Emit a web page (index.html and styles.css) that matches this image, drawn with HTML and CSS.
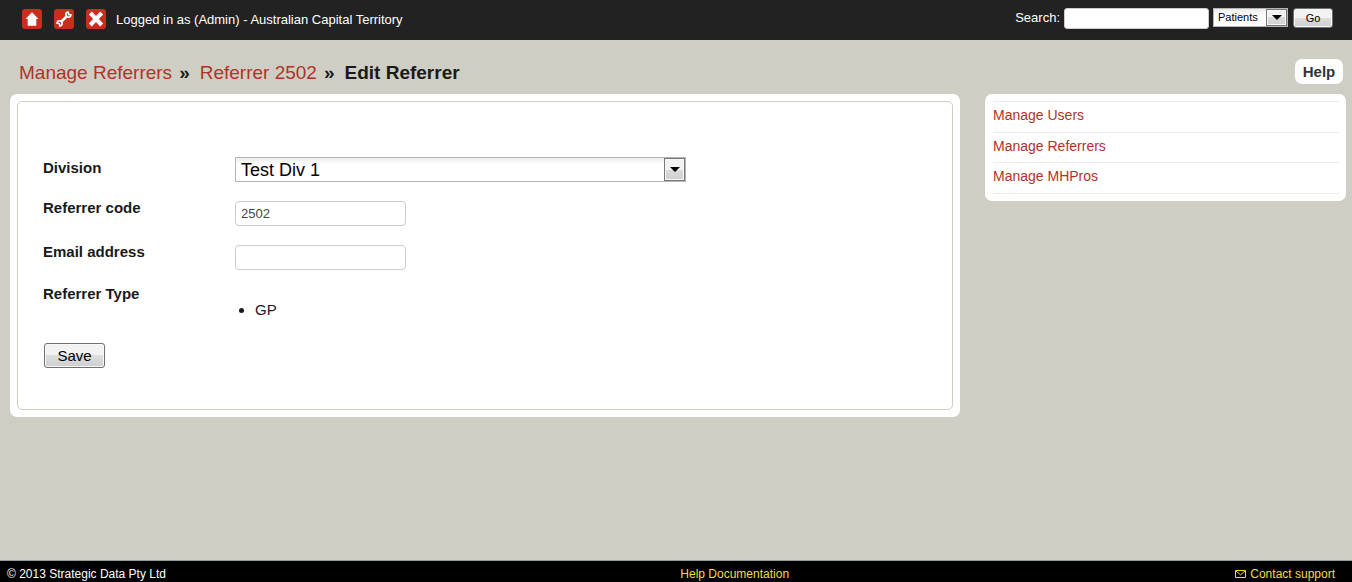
FILE: index.html
```html
<!DOCTYPE html>
<html lang="en">
<head>
<meta charset="utf-8">
<title>Edit Referrer</title>
<link rel="stylesheet" href="styles.css">
</head>
<body>
<header class="topbar">
  <nav class="tools" aria-label="Account">
    <a class="tool" href="#" aria-label="Home"><svg viewBox="0 0 20 20"><path d="M10 3.300 16.500 10H14.300V16.800H5.700V10H3.500z"/></svg></a>
    <a class="tool" href="#" aria-label="Settings"><svg viewBox="0 0 20 20"><path d="M6.800 13.200 13.200 6.800" fill="none" stroke="#fff" stroke-width="2.600"/><path d="M14.200 3A2.600 2.600 0 1 0 17 5.900L14.700 5.600z" fill="none" stroke="#fff" stroke-width="1.600"/><path d="M3 14.100A2.600 2.600 0 1 1 5.800 17L5.400 14.600z" fill="none" stroke="#fff" stroke-width="1.600"/></svg></a>
    <a class="tool" href="#" aria-label="Log out"><svg viewBox="0 0 20 20"><path d="M4.300 4 15.700 16M15.700 4 4.300 16" fill="none" stroke="#fff" stroke-width="4"/></svg></a>
  </nav>
  <span class="login">Logged in as (Admin) - Australian Capital Territory</span>
  <form class="search">
    <label for="q">Search:</label>
    <input class="search-text" id="q" type="text">
    <span class="picker picker-small">
      <select aria-label="Search in"><option>Patients</option></select>
      <span class="arrow"><svg viewBox="0 0 10 5"><path d="M0 0H10L5 5z"/></svg></span>
    </span>
    <button class="button button-small" type="button">Go</button>
  </form>
</header>
<div class="heading">
  <h1 class="crumbs"><a href="#">Manage Referrers</a><span class="sep">»</span><a href="#">Referrer 2502</a><span class="sep">»</span><span>Edit Referrer</span></h1>
  <a class="help" href="#">Help</a>
</div>
<div class="columns">
  <main class="panel">
    <form class="editor">
      <div class="row row-division">
        <label for="division">Division</label>
        <span class="picker picker-large">
          <select id="division"><option>Test Div 1</option></select>
          <span class="arrow"><svg viewBox="0 0 10 5"><path d="M0 0H10L5 5z"/></svg></span>
        </span>
      </div>
      <div class="row">
        <label for="code">Referrer code</label>
        <input class="field" id="code" type="text" value="2502">
      </div>
      <div class="row row-email">
        <label for="email">Email address</label>
        <input class="field" id="email" type="text">
      </div>
      <div class="row row-type">
        <span class="row-title">Referrer Type</span>
        <ul class="types"><li>GP</li></ul>
      </div>
      <button class="button button-save" type="button">Save</button>
    </form>
  </main>
  <aside class="side">
    <ul class="menu">
      <li><a href="#">Manage Users</a></li>
      <li><a href="#">Manage Referrers</a></li>
      <li><a href="#">Manage MHPros</a></li>
    </ul>
  </aside>
</div>
<footer class="footer">
  <span>© 2013 Strategic Data Pty Ltd</span>
  <a href="#">Help Documentation</a>
  <a class="contact" href="#"><svg viewBox="0 0 11 8"><path d="M.5.5h10v7h-10zM1 1 5.500 4.800 10 1" fill="none" stroke="#f4dc3c"/></svg>Contact support</a>
</footer>
</body>
</html>
```
FILE: styles.css
```css
* { box-sizing: border-box; }
body {
  margin: 0;
  min-height: 100vh;
  display: flex;
  flex-direction: column;
  background: #cfcec4;
  color: #1a1a1a;
  font: 15px/20px "Liberation Sans", Arial, sans-serif;
}
a { color: #b03328; text-decoration: none; }
svg { display: block; }
input, select, button { font-family: inherit; margin: 0; }

.topbar {
  display: flex;
  align-items: center;
  height: 40px;
  padding: 0 19px 2px 22px;
  background: #222;
  color: #fff;
  font-size: 13px;
}
.tools { display: flex; gap: 12px; margin-right: 10px; }
.tool { width: 20px; height: 20px; border-radius: 3px; background: #c92d1e; }
.tool svg { width: 20px; height: 20px; fill: #fff; }
.login { padding-top: 2px; }
.search { display: flex; align-items: flex-start; margin-left: auto; padding-bottom: 2px; }
.search-text {
  width: 145px;
  height: 21px;
  margin: 0 4px;
  padding: 0 5px;
  border: 1px solid #ccc;
  border-radius: 3px;
  background: #fff;
}

.picker { position: relative; display: block; }
.picker select {
  appearance: none;
  display: block;
  width: 100%;
  height: 100%;
  border: 1px solid #b5b5b5;
  border-radius: 0;
  background: linear-gradient(#ececec, #fff 6px);
  color: #000;
}
.arrow {
  position: absolute;
  top: 1px;
  right: 1px;
  bottom: 1px;
  width: 21px;
  display: flex;
  align-items: center;
  justify-content: center;
  border: 1px solid #777;
  background: linear-gradient(#f2f2f2 50%, #dcdcdc 50%, #d0d0d0);
  box-shadow: inset 0 0 0 1px #f8f8f8;
  pointer-events: none;
}
.arrow svg { width: 10px; height: 5px; }
.picker-small { width: 75px; height: 19px; margin-right: 5px; }
.picker-small select { padding: 0 24px 0 4px; font-size: 11px; }
.picker-large { width: 451px; height: 25px; }
.picker-large select { padding: 0 28px 0 5px; font-size: 18px; }

.button {
  padding: 0;
  border: 1px solid #707070;
  border-radius: 3px;
  background: linear-gradient(#f2f2f2 48%, #dddddd 50%, #cfcfcf);
  box-shadow: inset 0 0 0 1px #f8f8f8;
  color: #000;
}
.button-small { width: 40px; height: 20px; font-size: 11px; }
.button-save { width: 61px; height: 25px; margin-left: 1px; font-size: 15px; }

.heading {
  display: flex;
  align-items: flex-start;
  justify-content: space-between;
  padding: 19px 9px 10px 19px;
}
.crumbs { display: flex; margin: 0; font-size: 19px; line-height: 25px; padding-top: 1px; margin-bottom: -1px; }
.crumbs a { font-weight: normal; }
.sep { margin: 0 10px 0 7px; }
.help {
  min-width: 48px;
  border-radius: 7px;
  background: #fff;
  color: #333;
  font-weight: bold;
  line-height: 25px;
  text-align: center;
}

.columns {
  display: grid;
  grid-template-columns: 950fr 361fr;
  align-items: start;
  gap: 25px;
  padding: 0 6px 24px 10px;
}
.panel { padding: 7px; border-radius: 7px; background: #fff; }
.editor { padding: 55px 25px 41px; border: 1px solid #cfcec4; border-radius: 5px; }
.row { display: flex; align-items: flex-start; margin-bottom: 19px; }
.row label, .row-title { width: 192px; font-weight: bold; line-height: 13px; }
.row-division label { padding-top: 4px; }
.row-email { margin-bottom: 17px; }
.field {
  width: 171px;
  height: 25px;
  padding: 0 5px;
  border: 1px solid #ccc;
  border-radius: 4px;
  background: #fff;
  color: #444;
  font-size: 13px;
}
.row-type { margin-bottom: 23px; }
.types { margin: 13px 0 0; padding-left: 20px; }

.side { padding: 7px 7px 7px 8px; border-radius: 7px; background: #fff; }
.menu { margin: 0; padding: 0; list-style: none; border-top: 1px solid #ebebeb; font-size: 14px; }
.menu li { padding: 3px 0 6px; border-bottom: 1px solid #ebebeb; line-height: 21px; }
.menu li + li { padding-bottom: 5px; }
.menu li:last-child { padding-bottom: 6px; }

.footer {
  display: grid;
  grid-template-columns: 671fr auto 544fr;
  align-items: center;
  height: 22px;
  margin-top: auto;
  padding: 3px 17px 0 7px;
  border-top: 1px solid #929c98;
  background: #000;
  color: #fff;
  font-size: 12px;
}
.footer a { color: #f4dc3c; }
.footer .contact { display: flex; align-items: center; justify-self: end; gap: 4px; }
.contact svg { width: 11px; height: 8px; }
```
